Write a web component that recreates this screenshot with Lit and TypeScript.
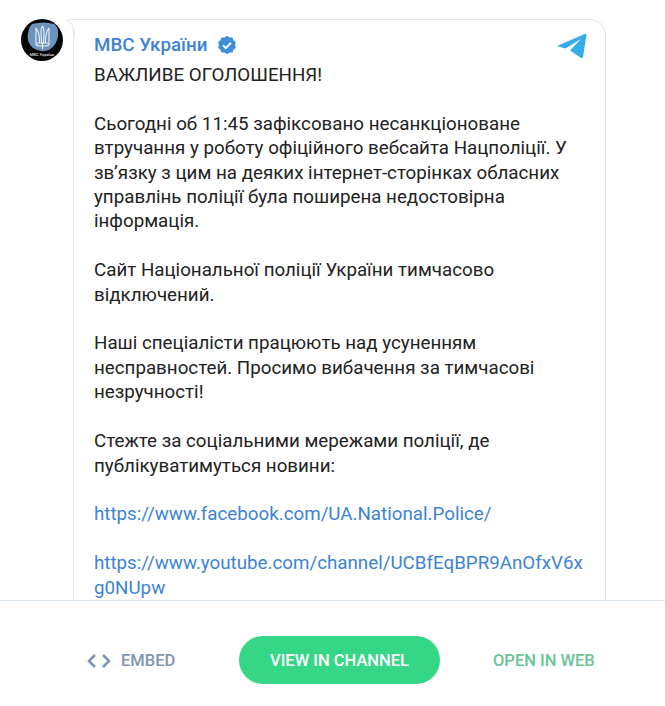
import { LitElement, html, css } from "lit";
import { customElement } from "lit/decorators.js";

@customElement("app-root")
export class AppRoot extends LitElement {
  static styles = css`
    :host { display: flex; flex-direction: column; width: 665px; height: 706px; overflow: hidden; background: #fff; font-family: Roboto, sans-serif; color: #222; }
    .stage { height: 600px; overflow: hidden; display: flex; align-items: flex-start; padding: 19px 0 0 21px; box-sizing: border-box; flex: none; }
    .avatar { width: 42px; height: 42px; flex: none; margin-right: 10px; }
    .caption { font-family: Roboto, sans-serif; font-size: 4px; font-weight: 700; fill: #c4c8cc; }
    .bubble { position: relative; width: 533px; box-sizing: border-box; padding: 13px 20px 0 20px; border: 1px solid #dde7f0; border-bottom: 0; border-radius: 0 16px 0 0; flex: none; min-height: 600px; }
    .tail { position: absolute; left: -8px; top: -1px; }
    .head { display: flex; align-items: center; gap: 10px; height: 24px; margin-bottom: 6px; }
    .name { color: #3d83d3; font-weight: 500; font-size: 18.76px; line-height: 24px; }
    .plane { position: absolute; right: 18px; top: 13px; }
    .text { font-size: 18.76px; line-height: 24.4px; color: #222; white-space: pre-wrap; word-break: break-word; }
    .text a { color: #3d83d3; text-decoration: none; }
    .footer { flex: 1; border-top: 1px solid #dde7f0; display: flex; align-items: flex-start; font-size: 16.5px; font-weight: 500; }
    .embed { display: flex; align-items: center; gap: 10px; color: #8095b4; margin: 50px 0 0 87px; width: 152px; line-height: 20px; }
    .btn { width: 201px; height: 48px; margin-top: 35px; border-radius: 24px; background: #35d786; color: #fff; display: flex; align-items: center; justify-content: center; }
    .open { color: #6cc397; margin: 50px 0 0 53px; line-height: 20px; }
  `;

  render() {
    return html`
      <div class="stage">
        <svg class="avatar" viewBox="0 0 42 42">
          <circle cx="21" cy="21" r="21" fill="#050505"/>
          <path d="M11 5 Q23 2 33 5 Q38 8 37 17 Q36 26 28 31 Q19 34 12 29 Q5 23 7 14 Q8 8 11 5Z" fill="#6b93bd"/>
          <path d="M21.500 7 Q19.500 10 20 14 L20.500 24 M21.500 7 Q23.500 10 23 14 L22.500 24 M15 9 Q19 14 18.500 24 M15 9 V24 Q15 27 18 27 H25 Q28 27 28 24 V9 M28 9 Q24 14 24.500 24 M21.500 24 V30 M16 24 H27" fill="none" stroke="#eef3f8" stroke-width="1.100" stroke-linejoin="round"/>
          <text class="caption" x="21" y="37" text-anchor="middle">МВС України</text>
        </svg>
        <div class="bubble">
          <svg class="tail" width="9" height="18" viewBox="0 0 9 18">
            <path d="M8.500 17.500 Q8.500 4 1 1.500 Q0 .5 1.500 .5 H9" fill="#fff" stroke="#dde7f0"/>
          </svg>
          <div class="head">
            <span class="name">МВС України</span>
            <svg width="20" height="20" viewBox="0 0 20 20">
              <path d="M10 .8l2.500 1.700 3-.1 1 2.800 2.400 1.900-.9 2.900.9 2.900-2.400 1.800-1 2.900-3-.1L10 19.200l-2.500-1.700-3 .1-1-2.900L1.100 12.900l.9-2.900-.9-2.900 2.400-1.900 1-2.800 3 .1z" fill="#3d8fd8"/>
              <path d="M6 10.300l2.800 2.800 5.200-5.400" fill="none" stroke="#fff" stroke-width="2"/>
            </svg>
          </div>
          <svg class="plane" width="30" height="26" viewBox="0 0 30 26">
            <path d="M1 12.500 L28.300 .8 Q29.700 .4 29.500 2 L26 24 Q25.500 25.800 23.800 24.800 L13 17.500 L24 6 L8.500 15.500 L1.500 13.600 Q0 13 1 12.500Z" fill="#35ade9"/>
          </svg>
          <div class="text">ВАЖЛИВЕ ОГОЛОШЕННЯ!

Сьогодні об 11:45 зафіксовано несанкціоноване
втручання у роботу офіційного вебсайта Нацполіції. У
зв’язку з цим на деяких інтернет-сторінках обласних
управлінь поліції була поширена недостовірна
інформація.

Сайт Національної поліції України тимчасово
відключений.

Наші спеціалісти працюють над усуненням
несправностей. Просимо вибачення за тимчасові
незручності!

Стежте за соціальними мережами поліції, де
публікуватимуться новини:

<a>https://www.facebook.com/UA.National.Police/</a>

<a>https://www.youtube.com/channel/UCBfEqBPR9AnOfxV6x
g0NUpw</a></div>
        </div>
      </div>
      <div class="footer">
        <div class="embed">
          <svg width="24" height="16" viewBox="0 0 24 16"><path d="M8 2 L2 8 L8 14 M16 2 L22 8 L16 14" fill="none" stroke="#8095b4" stroke-width="2.600"/></svg>
          <span>EMBED</span>
        </div>
        <div class="btn">VIEW IN CHANNEL</div>
        <div class="open">OPEN IN WEB</div>
      </div>
    `;
  }
}
